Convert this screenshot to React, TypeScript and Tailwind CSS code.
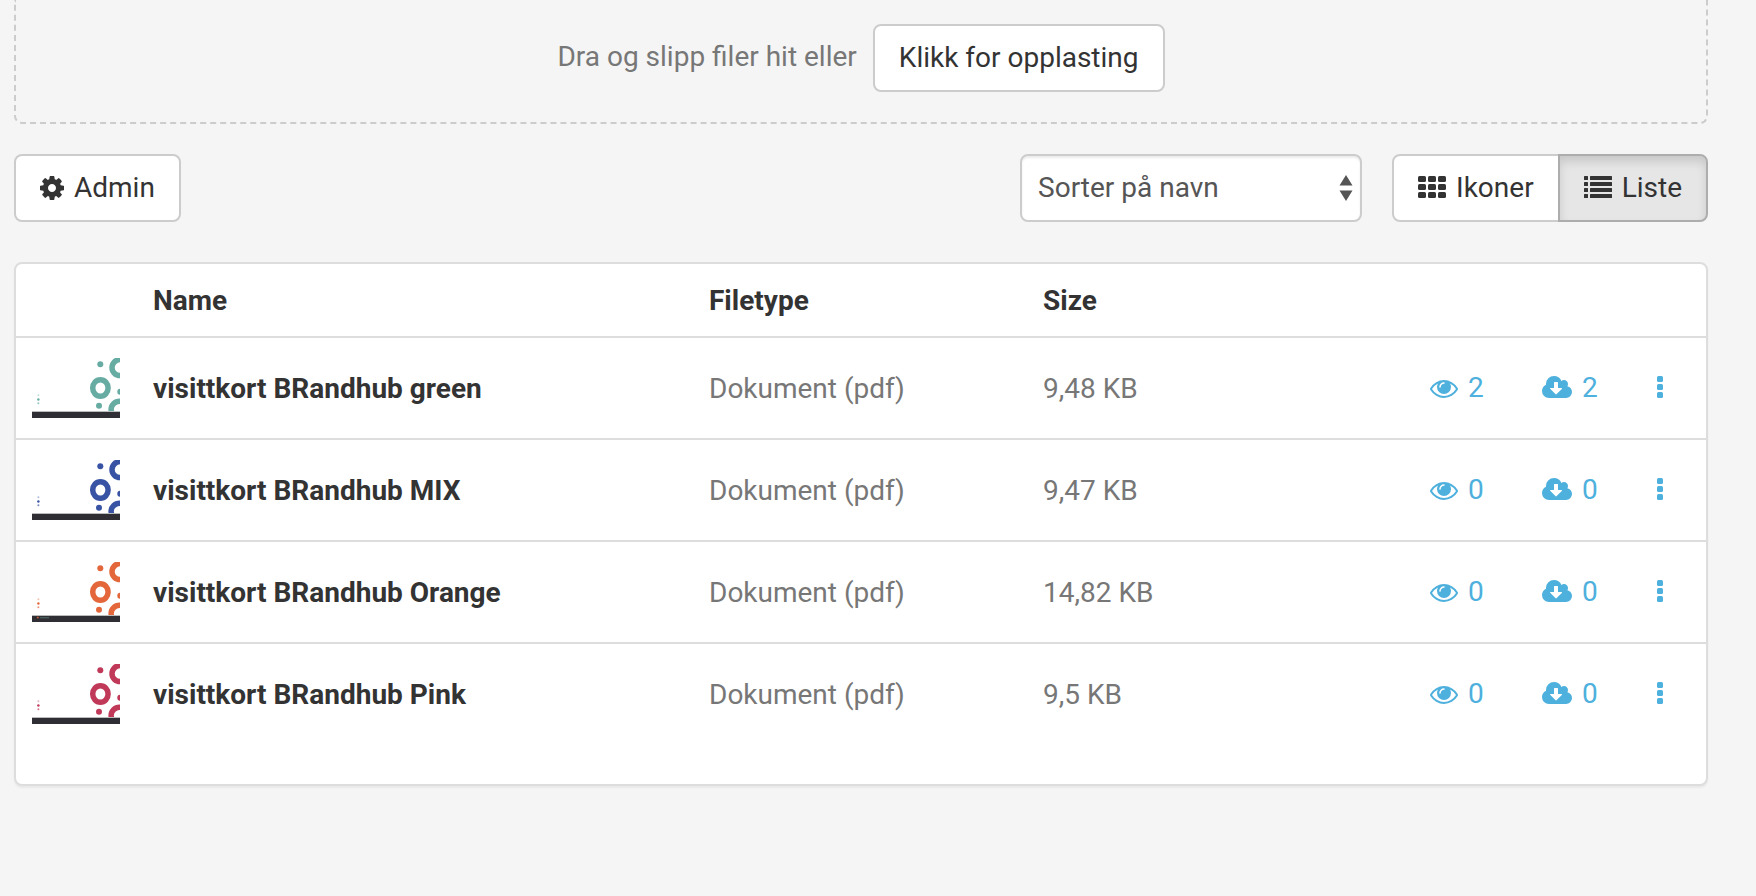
import { useState } from "react";
import type { ReactNode } from "react";
import clsx from "clsx";

interface FileItem {
  id: number;
  name: string;
  filetype: string;
  size: string;
  views: number;
  downloads: number;
  color: string;
  hasLogo?: boolean;
}

const files: FileItem[] = [
  { id: 1, name: "visittkort BRandhub green", filetype: "Dokument (pdf)", size: "9,48 KB", views: 2, downloads: 2, color: "#67aca3" },
  { id: 2, name: "visittkort BRandhub MIX", filetype: "Dokument (pdf)", size: "9,47 KB", views: 0, downloads: 0, color: "#3953a4" },
  { id: 3, name: "visittkort BRandhub Orange", filetype: "Dokument (pdf)", size: "14,82 KB", views: 0, downloads: 0, color: "#e4673b", hasLogo: true },
  { id: 4, name: "visittkort BRandhub Pink", filetype: "Dokument (pdf)", size: "9,5 KB", views: 0, downloads: 0, color: "#c03959" },
];

function CogIcon() {
  return (
    <svg viewBox="0 128 1536 1536" className="w-6 h-6 shrink-0" fill="currentColor" aria-hidden="true">
      <path d="M1024 896q0-106-75-181t-181-75-181 75-75 181 75 181 181 75 181-75 75-181zm512-109v222q0 12-8 23t-20 13l-185 28q-19 54-39 91 35 50 107 138 10 12 10 25t-9 23q-27 37-99 108t-94 71q-12 0-26-9l-138-108q-44 23-91 38-16 136-29 186-7 28-36 28h-222q-14 0-24.5-8.5t-11.5-21.5l-28-184q-49-16-90-37l-141 107q-10 9-25 9-14 0-25-11-126-114-165-168-7-10-7-23 0-12 8-23 15-21 51-66.5t54-70.5q-27-50-41-99l-183-27q-13-2-21-12.5t-8-23.5v-222q0-12 8-23t19-13l186-28q14-46 39-92-40-57-107-138-10-12-10-24 0-10 9-23 26-36 98.5-107.5t94.5-71.5q13 0 26 10l138 107q44-23 91-38 16-136 29-186 7-28 36-28h222q14 0 24.5 8.5t11.5 21.5l28 184q49 16 90 37l142-107q9-9 24-9 13 0 25 10 129 119 165 170 7 8 7 22 0 12-8 23-15 21-51 66.5t-54 70.5q26 50 41 98l183 28q13 2 21 12.5t8 23.5z" />
    </svg>
  );
}

function GridIcon() {
  return (
    <svg viewBox="0 0 28 24" className="w-7 h-6 shrink-0" fill="currentColor" aria-hidden="true">
      {[0, 8, 16].map((y) =>
        [0, 10, 20].map((x) => <rect key={`${x}-${y}`} x={x} y={y} width="8" height="6" rx="1.5" />)
      )}
    </svg>
  );
}

function ListIcon() {
  return (
    <svg viewBox="0 0 28 24" className="w-7 h-6 shrink-0" fill="currentColor" aria-hidden="true">
      {[0, 6, 12, 18].map((y) => (
        <g key={y}>
          <rect x="0" y={y} width="4" height="4" rx="0.5" />
          <rect x="6" y={y} width="22" height="4" rx="0.5" />
        </g>
      ))}
    </svg>
  );
}

function EyeIcon() {
  return (
    <svg viewBox="0 128 1792 1536" className="w-7 h-6 shrink-0" fill="currentColor" aria-hidden="true">
      <path d="M1664 960q-152-236-381-353 61 104 61 225 0 185-131.5 316.5t-316.5 131.5-316.5-131.5-131.5-316.5q0-121 61-225-229 117-381 353 133 205 333.5 326.5t434.5 121.5 434.5-121.5 333.5-326.5zm-720-384q0-20-14-34t-34-14q-125 0-214.5 89.5t-89.5 214.5q0 20 14 34t34 14 34-14 14-34q0-86 61-147t147-61q20 0 34-14t14-34zm848 384q0 34-20 69-140 230-376.5 368.5t-499.5 138.5-499.5-139-376.5-368q-20-35-20-69t20-69q140-229 376.5-368t499.5-139 499.5 139 376.5 368q20 35 20 69z" />
    </svg>
  );
}

function CloudDownloadIcon() {
  return (
    <svg viewBox="0 128 1920 1536" className="w-[30px] h-6 shrink-0" fill="currentColor" aria-hidden="true">
      <path d="M1280 928q0-14-9-23t-23-9h-224v-352q0-13-9.5-22.5t-22.5-9.5h-192q-13 0-22.5 9.5t-9.5 22.5v352h-224q-13 0-22.5 9.5t-9.5 22.5q0 14 9 23l352 352q9 9 23 9t23-9l351-351q10-12 10-24zm640 224q0 159-112.5 271.5t-271.5 112.5h-1088q-185 0-316.5-131.5t-131.5-316.5q0-130 70-240t188-165q-2-30-2-43 0-212 150-362t362-150q156 0 285.5 87t188.5 231q71-62 166-62 106 0 181 75t75 181q0 76-41 138 130 31 213.5 135.5t83.5 238.5z" />
    </svg>
  );
}

function DotsIcon() {
  return (
    <svg viewBox="0 0 6 24" className="w-[6px] h-6 shrink-0" fill="currentColor" aria-hidden="true">
      {[0, 8, 16].map((y) => (
        <rect key={y} x="0" y={y} width="6" height="6" rx="1.5" />
      ))}
    </svg>
  );
}

// Small preview of the business card: rings on the right, dark footer bar
function Thumbnail({ color, hasLogo }: { color: string; hasLogo?: boolean }) {
  return (
    <svg viewBox="0 0 88 60" className="block w-[88px] h-[60px]" aria-hidden="true">
      <rect width="88" height="60" fill="#fff" />
      <g fill={color}>
        <circle cx="68.3" cy="6.3" r="3" />
        <circle cx="67" cy="47.7" r="3" />
        <circle cx="88.3" cy="33.7" r="3" />
        <circle cx="6.4" cy="41.5" r="1.2" />
        <circle cx="6.4" cy="45.3" r="1" opacity="0.7" />
        <circle cx="6.4" cy="37.3" r="1" opacity="0.4" />
      </g>
      <g fill="none" stroke={color} strokeWidth="5.5">
        <ellipse cx="68.4" cy="30" rx="7.7" ry="8.2" />
        <ellipse cx="88" cy="9.6" rx="8" ry="8" />
        <ellipse cx="87.5" cy="51.5" rx="8.4" ry="8.2" />
      </g>
      <rect y="53" width="88" height="1" fill="#b9bcbb" />
      <rect y="54" width="88" height="6" fill="#2f2e35" />
      {hasLogo && (
        <g>
          <circle cx="5.8" cy="55.6" r="1" fill={color} opacity="0.8" />
          <rect x="8" y="55" width="9" height="1.4" fill="#4f6f6a" opacity="0.7" />
        </g>
      )}
    </svg>
  );
}

function Button({
  children,
  active,
  className,
  onClick,
}: {
  children: ReactNode;
  active?: boolean;
  className?: string;
  onClick?: () => void;
}) {
  return (
    <button
      type="button"
      onClick={onClick}
      className={clsx(
        "flex items-center gap-[10px] border-2 px-6 py-3 whitespace-nowrap text-[#333] cursor-pointer",
        active
          ? "relative border-[#adadad] bg-[#e6e6e6] shadow-[inset_0_6px_10px_rgba(0,0,0,0.125)]"
          : "border-[#ccc] bg-white",
        className
      )}
    >
      {children}
    </button>
  );
}

export default function App() {
  const [view, setView] = useState("list");

  return (
    <div className="min-h-screen bg-[#f5f5f5] pl-[14px] pr-12 font-['Roboto',sans-serif] text-[28px] leading-10 text-[#777]">
      {/* Drop zone */}
      <div className="flex items-center justify-center gap-4 border-2 border-t-0 border-dashed border-[#ccc] rounded-b-lg pt-6 pb-[30px]">
        <span className="pb-[2px]">Dra og slipp filer hit eller</span>
        <Button className="rounded-lg">Klikk for opplasting</Button>
      </div>

      {/* Toolbar */}
      <div className="flex items-center justify-between mt-[30px]">
        <Button className="rounded-lg">
          <CogIcon />
          Admin
        </Button>

        <div className="flex items-center gap-[30px]">
          <div className="relative">
            <select
              aria-label="Sortering"
              className="appearance-none w-[342px] h-[68px] pl-4 pr-10 rounded-lg border-2 border-[#ccc] bg-white text-[#555] shadow-[inset_0_2px_2px_rgba(0,0,0,0.075)]"
            >
              <option>Sorter på navn</option>
              <option>Sorter på dato</option>
            </select>
            <svg
              viewBox="0 0 14 26"
              className="absolute right-[9px] top-[21px] w-[14px] h-[26px] text-[#555] pointer-events-none"
              fill="currentColor"
              aria-hidden="true"
            >
              <path d="M7 0l6.5 10.500H.5zM7 26L.5 15.500h13z" />
            </svg>
          </div>

          <div className="flex">
            <Button className="rounded-l-lg" active={view === "icons"} onClick={() => setView("icons")}>
              <GridIcon />
              Ikoner
            </Button>
            <Button className="rounded-r-lg -ml-[2px]" active={view === "list"} onClick={() => setView("list")}>
              <ListIcon />
              Liste
            </Button>
          </div>
        </div>
      </div>

      {/* File list */}
      <div className="mt-10 pb-10 rounded-lg border-2 border-[#ddd] bg-white shadow-[0_2px_2px_rgba(0,0,0,0.05)]">
        <table className="w-full table-fixed text-left">
          <thead>
            <tr className="text-[#333]">
              <th className="w-[120px]" />
              <th className="pl-[17px] pt-[17px] pb-[15px] font-bold">Name</th>
              <th className="w-[334px] pl-[17px] pt-[17px] pb-[15px] font-bold">Filetype</th>
              <th className="w-[388px] pl-[17px] pt-[17px] pb-[15px] font-bold">Size</th>
              <th className="w-[112px]" />
              <th className="w-[115px]" />
              <th className="w-[65px]" />
            </tr>
          </thead>
          <tbody>
            {files.map((file) => (
              <tr key={file.id} className="border-t-2 border-[#ddd]">
                <td className="px-4 py-5">
                  <Thumbnail color={file.color} hasLogo={file.hasLogo} />
                </td>
                <td className="pl-[17px] pt-[2px] font-bold text-[#333]">{file.name}</td>
                <td className="pl-[17px] pt-[2px]">{file.filetype}</td>
                <td className="pl-[17px] pt-[2px]">{file.size}</td>
                <td className="pl-4">
                  <a href="#" className="flex items-center gap-[10px] text-[#4eb0dd]">
                    <EyeIcon />
                    {file.views}
                  </a>
                </td>
                <td className="pl-4">
                  <a href="#" className="flex items-center gap-[10px] text-[#4eb0dd]">
                    <CloudDownloadIcon />
                    {file.downloads}
                  </a>
                </td>
                <td className="pl-4">
                  <button type="button" aria-label="Flere valg" className="block text-[#4eb0dd] cursor-pointer">
                    <DotsIcon />
                  </button>
                </td>
              </tr>
            ))}
          </tbody>
        </table>
      </div>
    </div>
  );
}
